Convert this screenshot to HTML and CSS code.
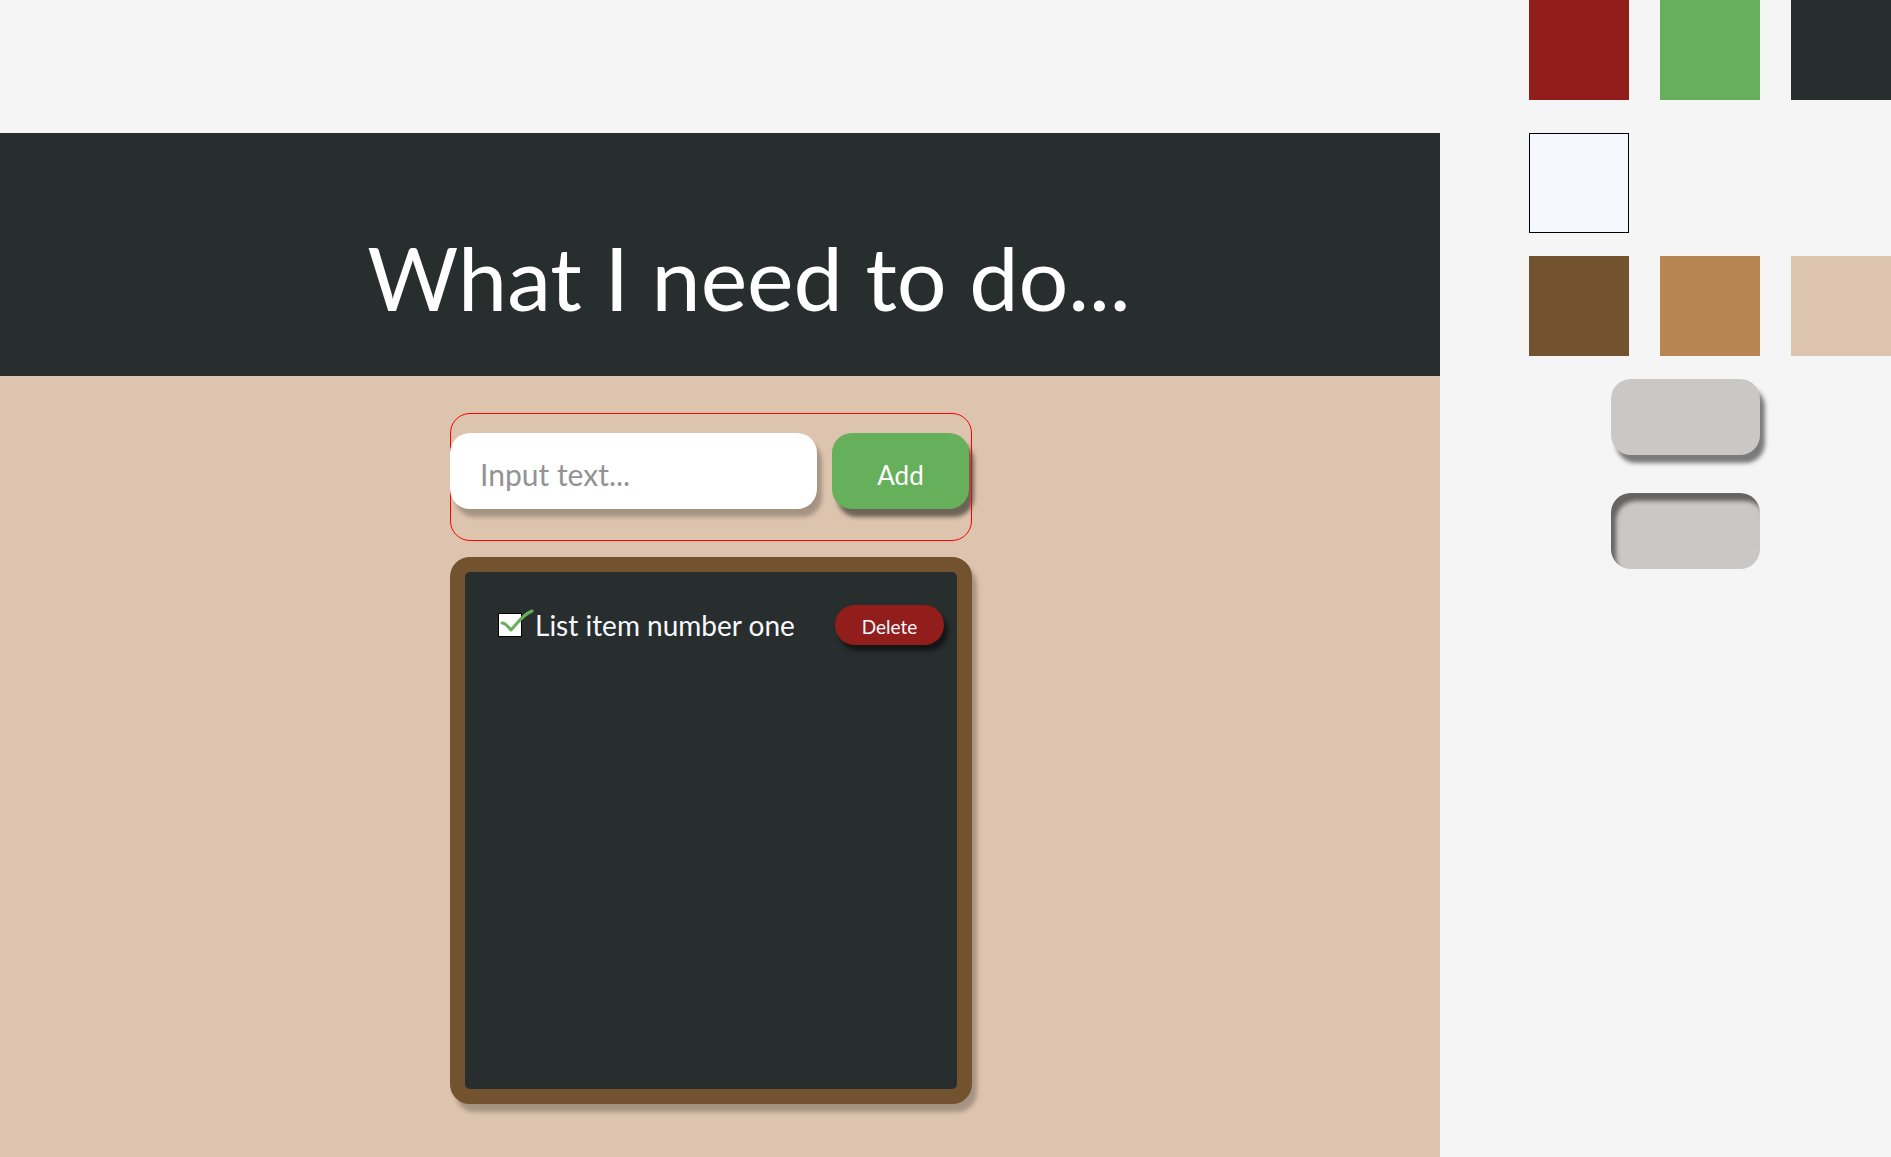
FILE: index.html
```html
<!DOCTYPE html>
<html lang="en">
<head>
<meta charset="utf-8">
<meta name="viewport" content="width=device-width, initial-scale=1">
<title>What I need to do...</title>
<link rel="stylesheet" href="styles.css">
</head>
<body>
<div class="page">
  <div class="app">
    <header class="header">
      <h1 class="title">What I need to do...</h1>
    </header>
    <main class="content">
      <form class="add-form">
        <input class="add-input" type="text" placeholder="Input text..." aria-label="New item">
        <button class="add-button" type="button">Add</button>
      </form>
      <ul class="board">
        <li class="item">
          <label class="item-label">
            <span class="check">
              <input class="check-box" type="checkbox" checked>
              <svg class="check-mark" viewBox="0 0 40 30" aria-hidden="true"><path d="M4 15C8 15 10 19 13 22C18 17 24 7 34 3"/></svg>
            </span>
            <span class="item-text">List item number one</span>
          </label>
          <button class="delete-button" type="button">Delete</button>
        </li>
      </ul>
    </main>
  </div>
  <aside class="palette">
    <div class="swatches">
      <div class="swatch red"></div>
      <div class="swatch green"></div>
      <div class="swatch slate"></div>
    </div>
    <div class="swatches">
      <div class="swatch white"></div>
    </div>
    <div class="swatches">
      <div class="swatch brown"></div>
      <div class="swatch tan"></div>
      <div class="swatch sand"></div>
    </div>
    <div class="samples">
      <div class="sample raised"></div>
      <div class="sample pressed"></div>
    </div>
  </aside>
</div>
</body>
</html>
```
FILE: styles.css
```css
:root {
  --red: #921e1b;
  --green: #66af5b;
  --slate: #282d2d;
  --white: #f5f8ff;
  --brown: #735230;
  --tan: #b78551;
  --sand: #ddc4ae;
}

* {
  box-sizing: border-box;
}

body {
  margin: 0;
  background: #f5f5f5;
  font-family: Lato, "Open Sans", sans-serif;
}

input,
button {
  font-family: inherit;
  border: 0;
}

.page {
  display: grid;
  grid-template-columns: 1fr 451px;
  min-height: 100vh;
}

.app {
  display: flex;
  flex-direction: column;
  padding-top: 133px;
}

.header {
  padding: 88px 0 43px 58px;
  background: var(--slate);
}

.title {
  margin: 0;
  color: #fff;
  font-size: 88px;
  font-weight: 400;
  line-height: 112px;
  text-align: center;
}

.content {
  flex: 1;
  display: flex;
  flex-direction: column;
  align-items: center;
  gap: 16px;
  padding: 37px 18px 53px 0;
  background: var(--sand);
}

.add-form {
  position: relative;
  display: flex;
  gap: 15px;
  width: 522px;
  padding: 20px 3px 32px 0;
}

.add-form::after {
  content: "";
  position: absolute;
  inset: 0;
  border: 1px solid #f00;
  border-radius: 20px;
  pointer-events: none;
}

.add-input {
  position: relative;
  z-index: 1;
  flex: 1;
  min-width: 0;
  height: 76px;
  padding: 6px 30px 0;
  border-radius: 20px;
  background: #fff;
  box-shadow: 5px 8px 4px rgba(0, 0, 0, 0.25);
  color: var(--slate);
  font-size: 30px;
}

.add-input::placeholder {
  color: #939393;
  opacity: 1;
}

.add-button {
  width: 137px;
  height: 76px;
  padding: 8px 0 0;
  border-radius: 20px;
  background: var(--green);
  box-shadow: 5px 8px 4px rgba(0, 0, 0, 0.5);
  color: #fff;
  font-size: 26px;
}

.board {
  flex: 1;
  width: 522px;
  margin: 0;
  padding: 33px 13px 33px 33px;
  border: 15px solid var(--brown);
  border-radius: 20px;
  background: var(--slate);
  box-shadow: 5px 8px 4px rgba(0, 0, 0, 0.25);
  list-style: none;
}

.item,
.item-label {
  display: flex;
  align-items: center;
}

.item {
  justify-content: space-between;
}

.item-label {
  gap: 13px;
}

.check {
  position: relative;
  width: 24px;
  height: 24px;
}

.check-box {
  appearance: none;
  display: block;
  width: 24px;
  height: 24px;
  margin: 0;
  border: 1px solid #000;
  background: #fff;
}

.check-mark {
  position: absolute;
  left: 0;
  top: -5px;
  width: 40px;
  height: 30px;
  display: none;
  fill: none;
  stroke: var(--green);
  stroke-width: 3;
  stroke-linecap: round;
  stroke-linejoin: round;
  pointer-events: none;
}

.check-box:checked + .check-mark {
  display: block;
}

.item-text {
  color: var(--white);
  font-size: 28px;
  line-height: 40px;
}

.delete-button {
  width: 109px;
  height: 40px;
  padding: 2px 0 0;
  border-radius: 20px;
  background: var(--red);
  box-shadow: 4px 6px 4px rgba(0, 0, 0, 0.5);
  color: var(--white);
  font-size: 19px;
}

.palette {
  padding-left: 89px;
}

.swatches {
  display: grid;
  grid-template-columns: repeat(3, 100px);
  gap: 31px;
  margin-bottom: 23px;
}

.swatches:first-child {
  margin-bottom: 33px;
}

.swatch {
  height: 100px;
}

.red { background: var(--red); }
.green { background: var(--green); }
.slate { background: var(--slate); }
.white { background: var(--white); border: 1px solid #000; }
.brown { background: var(--brown); }
.tan { background: var(--tan); }
.sand { background: var(--sand); }

.samples {
  display: grid;
  gap: 38px;
  padding-left: 82px;
}

.sample {
  width: 149px;
  height: 76px;
  border-radius: 20px;
  background: #c9c8c6;
}

.raised {
  box-shadow: 5px 8px 4px rgba(0, 0, 0, 0.5);
}

.pressed {
  box-shadow: inset 5px 8px 4px rgba(0, 0, 0, 0.5);
}
```
